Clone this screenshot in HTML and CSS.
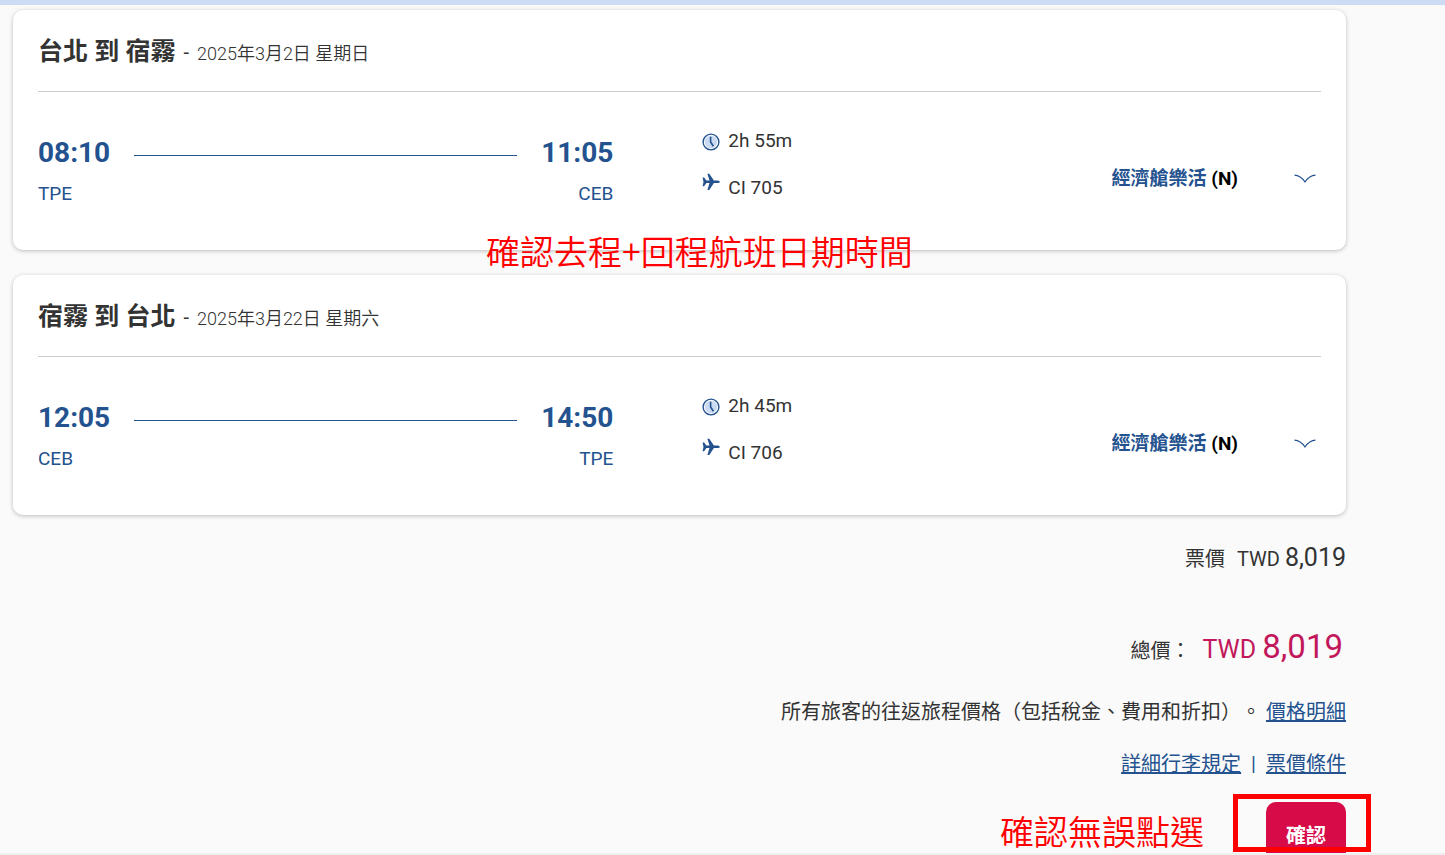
FILE: index.html
```html
<!DOCTYPE html>
<html lang="zh-Hant">
<head>
  <meta charset="UTF-8" />
  <meta name="viewport" content="width=device-width, initial-scale=1.0" />
  <title>確認航班</title>
  <link rel="stylesheet" href="styles.css">
</head>
<body>
  <svg class="sprite" aria-hidden="true">
    <symbol id="icon-clock" viewBox="0 0 18 18">
      <circle cx="9" cy="9" r="7.9" fill="#fff" stroke="#23528f" stroke-width="1.4"/>
      <circle cx="9" cy="9" r="6.2" fill="#c9daf2"/>
      <path d="M8.6 3.8V9l2.8 4.2" fill="none" stroke="#23528f" stroke-width="1.6"/>
    </symbol>
    <symbol id="icon-plane" viewBox="0 0 18 18">
      <path d="M0.6 4.5h1.5L4.4 7.6H7.5L5.4 0.8h1.9L11.9 7.6H15.6Q17.9 7.8 17.9 8.9T15.6 10.1H11.9L7.3 17H5.4L7.5 10.1H4.4L2.1 13.2H0.6L1.5 8.9Z" fill="#23528f"/>
    </symbol>
    <symbol id="icon-chevron" viewBox="0 0 22 10">
      <path d="M0.5 1.2Q6.5 1.5 11 8Q15.5 1.5 21.5 1.2" fill="none" stroke="#23528f" stroke-width="1.2"/>
    </symbol>
  </svg>

  <div class="top-bar"></div>

  <main class="content">
    <section class="flight-card">
      <div class="card-header">
        <h2>台北 到 宿霧</h2>
        <span class="dash">-</span>
        <span class="date">2025年3月2日 星期日</span>
      </div>
      <div class="flight">
        <div class="route">
          <div class="stop">
            <span class="time">08:10</span>
            <span class="airport">TPE</span>
          </div>
          <div class="route-line"></div>
          <div class="stop arrival">
            <span class="time">11:05</span>
            <span class="airport">CEB</span>
          </div>
        </div>
        <div class="info">
          <div class="info-row"><svg class="icon clock"><use href="#icon-clock"/></svg>2h 55m</div>
          <div class="info-row"><svg class="icon plane"><use href="#icon-plane"/></svg>CI 705</div>
        </div>
        <div class="fare"><span class="fare-name">經濟艙樂活</span> (N)</div>
        <button class="toggle" type="button" aria-label="展開"><svg class="chevron"><use href="#icon-chevron"/></svg></button>
      </div>
      <p class="note note-flights">確認去程+回程航班日期時間</p>
    </section>

    <section class="flight-card">
      <div class="card-header">
        <h2>宿霧 到 台北</h2>
        <span class="dash">-</span>
        <span class="date">2025年3月22日 星期六</span>
      </div>
      <div class="flight">
        <div class="route">
          <div class="stop">
            <span class="time">12:05</span>
            <span class="airport">CEB</span>
          </div>
          <div class="route-line"></div>
          <div class="stop arrival">
            <span class="time">14:50</span>
            <span class="airport">TPE</span>
          </div>
        </div>
        <div class="info">
          <div class="info-row"><svg class="icon clock"><use href="#icon-clock"/></svg>2h 45m</div>
          <div class="info-row"><svg class="icon plane"><use href="#icon-plane"/></svg>CI 706</div>
        </div>
        <div class="fare"><span class="fare-name">經濟艙樂活</span> (N)</div>
        <button class="toggle" type="button" aria-label="展開"><svg class="chevron"><use href="#icon-chevron"/></svg></button>
      </div>
    </section>

    <section class="summary">
      <div class="price">
        <span>票價</span>
        <span class="amount">TWD <span class="number">8,019</span></span>
      </div>
      <div class="price total">
        <span>總價：</span>
        <span class="amount">TWD <span class="number">8,019</span></span>
      </div>
      <p class="links">所有旅客的往返旅程價格（包括稅金、費用和折扣）。 <a href="#">價格明細</a></p>
      <p class="links rules"><a href="#">詳細行李規定</a><span class="divider">|</span><a href="#">票價條件</a></p>
      <div class="actions">
        <button class="confirm" type="button">確認</button>
        <div class="highlight"></div>
        <p class="note note-confirm">確認無誤點選</p>
      </div>
    </section>
  </main>

  <div class="bottom-bar"></div>
</body>
</html>
```

FILE: styles.css
```css
* {
  box-sizing: border-box;
}
body {
  margin: 0;
  height: 100vh;
  display: flex;
  flex-direction: column;
  overflow: hidden;
  font-family: Roboto, 'Noto Sans CJK TC', sans-serif;
  font-size: 20px;
  color: #333;
  background: #fafafa;
  text-spacing-trim: space-all;
}
h2, p {
  margin: 0;
}
a {
  color: #23528f;
  text-underline-offset: 1px;
}
.sprite {
  position: absolute;
  width: 0;
  height: 0;
}
.top-bar {
  flex: none;
  height: 5px;
  background: #cbdcf4;
}
.bottom-bar {
  flex: none;
  height: 2px;
  background: #efefef;
}
.content {
  flex: 1;
  min-height: 0;
  overflow: hidden;
  padding: 5px 99px 0 13px;
}

/* flight cards */
.flight-card {
  position: relative;
  margin-bottom: 25px;
  padding: 0 25px;
  background: #fff;
  border-radius: 10px;
  box-shadow: 0 1px 4px rgba(0,0,0,0.25);
}
.card-header {
  display: flex;
  align-items: center;
  height: 82px;
  padding-top: 3px;
  border-bottom: 1px solid #ccc;
}
.card-header h2 {
  font-size: 25px;
  line-height: 36px;
}
.dash {
  margin: 0 8px;
}
.date {
  font-size: 18px;
  font-weight: 350;
}
.flight {
  display: flex;
  height: 158px;
}
.route {
  flex: 0 0 45%;
  display: flex;
  padding: 41px 2px 0 0;
}
.stop {
  display: flex;
  flex-direction: column;
  gap: 11px;
  color: #23528f;
}
.arrival {
  text-align: right;
}
.time {
  font-size: 28px;
  font-weight: bold;
  line-height: 40px;
}
.airport {
  font-size: 19px;
  line-height: 20px;
}
.route-line {
  flex: 1;
  height: 1px;
  margin: 22px 24px 0 24px;
  background: #23528f;
}
.info {
  padding: 36px 0 0 87px;
  font-size: 19px;
}
.info-row {
  display: flex;
  align-items: center;
  height: 24px;
  margin-bottom: 23px;
  gap: 8px;
}
.icon {
  width: 18px;
  height: 18px;
}
.clock {
  margin-top: 4px;
}
.plane {
  margin-bottom: 10px;
}
.fare {
  margin-left: auto;
  padding-top: 73px;
  font-size: 19px;
  font-weight: bold;
  line-height: 28px;
  color: #000;
}
.fare-name {
  color: #23528f;
}
.toggle {
  align-self: flex-start;
  margin: 78px 5px 0 56px;
  padding: 4px 0;
  border: none;
  background: none;
  cursor: pointer;
}
.chevron {
  display: block;
  width: 22px;
  height: 10px;
}

/* prices */
.summary {
  padding-top: 2px;
  text-align: right;
}
.price {
  display: flex;
  justify-content: flex-end;
  align-items: baseline;
  gap: 12px;
  line-height: 32px;
}
.price .number {
  font-size: 25px;
}
.total {
  margin-top: 52px;
  padding-right: 3px;
  line-height: 40px;
}
.total .amount {
  font-size: 25px;
  color: #c2185b;
}
.total .number {
  font-size: 33px;
}
.links {
  margin-top: 26px;
  line-height: 30px;
}
.rules {
  margin-top: 22px;
  color: #23528f;
}
.divider {
  margin: 0 10px;
}
.actions {
  position: relative;
  margin-top: 23px;
}
.confirm {
  width: 80px;
  height: 64px;
  border: none;
  border-radius: 10px;
  background: #d60b48;
  color: #fff;
  font-family: inherit;
  font-size: 20px;
  font-weight: bold;
  cursor: pointer;
}

/* red notes */
.note {
  position: absolute;
  font-family: 'Noto Sans CJK TC', sans-serif;
  font-size: 34px;
  font-weight: 350;
  line-height: 50px;
  white-space: nowrap;
  color: #f00;
}
.note-flights {
  top: 216px;
  left: 473px;
}
.note-confirm {
  top: 6px;
  right: 142px;
  line-height: 46px;
}
.highlight {
  position: absolute;
  top: -8px;
  right: -25px;
  width: 138px;
  height: 58px;
  border: 5px solid #f00;
}
```
